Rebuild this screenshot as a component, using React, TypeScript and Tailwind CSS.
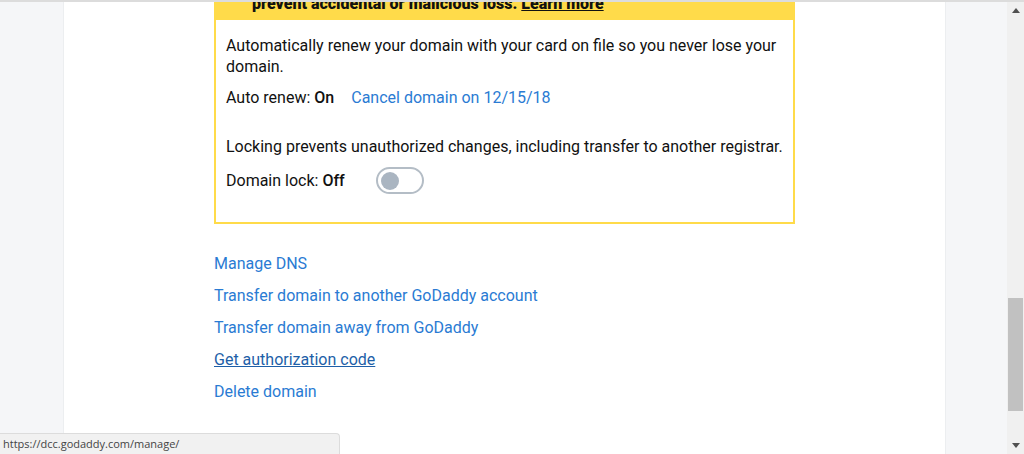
const links = [
  { label: "Manage DNS" },
  { label: "Transfer domain to another GoDaddy account" },
  { label: "Transfer domain away from GoDaddy" },
  { label: "Get authorization code", hover: true },
  { label: "Delete domain" },
]

function Toggle() {
  return (
    <div className="flex h-[27px] w-[48px] items-center rounded-full border-2 border-[#b4bdc6] bg-white px-[3px]">
      <div className="h-[18px] w-[18px] rounded-full bg-[#aab5c1]" />
    </div>
  )
}

export default function App() {
  return (
    <div className="relative flex h-[454px] w-[1024px] overflow-hidden border-t-2 border-[#dcdcdc] font-['Roboto',sans-serif] text-[16px] text-[#111]">
      <div className="w-[64px] shrink-0 border-r border-[#eceef0] bg-[#f5f6f8]" />

      <main className="flex-1 bg-white pl-[150px]">
        <div className="-mt-[23px] w-[581px] border-2 border-[#ffdb4a]">
          <div className="bg-[#ffdb4a] pb-[5px] pl-[36px] pt-[12px] text-[16px] font-black leading-[22px]">
            prevent accidental or malicious loss. <span className="underline">Learn more</span>
          </div>
          <div className="pb-[28px] pl-[10px] pr-[6px] pt-[15px] leading-[21px]">
            <p>Automatically renew your domain with your card on file so you never lose your domain.</p>
            <div className="mt-[10px] flex items-center gap-[17px]">
              <span>
                Auto renew: <span className="font-medium">On</span>
              </span>
              <a className="text-[#2a7bd3]">Cancel domain on 12/15/18</a>
            </div>
            <p className="mt-[28px]">Locking prevents unauthorized changes, including transfer to another registrar.</p>
            <div className="mt-[10px] flex items-center gap-[31px]">
              <span>
                Domain lock: <span className="font-medium">Off</span>
              </span>
              <Toggle />
            </div>
          </div>
        </div>

        <ul className="mt-[29px] flex flex-col gap-[10px] leading-[22px]">
          {links.map((l) => (
            <li key={l.label}>
              <a className={l.hover ? "text-[#1e5fa8] underline" : "text-[#2a7bd3]"}>{l.label}</a>
            </li>
          ))}
        </ul>
      </main>

      <div className="w-[62px] shrink-0 border-l border-[#eceef0] bg-[#f5f6f8]" />

      <div className="flex w-[17px] shrink-0 flex-col bg-[#f0f0f0]">
        <div className="flex h-[17px] items-center justify-center text-[#505050]">
          <svg width="8" height="5" viewBox="0 0 8 5">
            <path d="M0 5 L4 0 L8 5 Z" fill="currentColor" />
          </svg>
        </div>
        <div className="mx-[1px] mt-[279px] h-[113px] bg-[#c1c1c1]" />
        <div className="mt-auto flex h-[17px] items-center justify-center text-[#505050]">
          <svg width="8" height="5" viewBox="0 0 8 5">
            <path d="M0 0 L4 5 L8 0 Z" fill="currentColor" />
          </svg>
        </div>
      </div>

      <div className="absolute bottom-0 left-0 flex h-[21px] w-[340px] items-center rounded-tr-[4px] border-r border-t border-[#dcdcdc] bg-[#f1f1f1] pl-[3px] font-['Open_Sans',sans-serif] text-[11px] text-[#444]">
        https://dcc.godaddy.com/manage/
      </div>
    </div>
  )
}
